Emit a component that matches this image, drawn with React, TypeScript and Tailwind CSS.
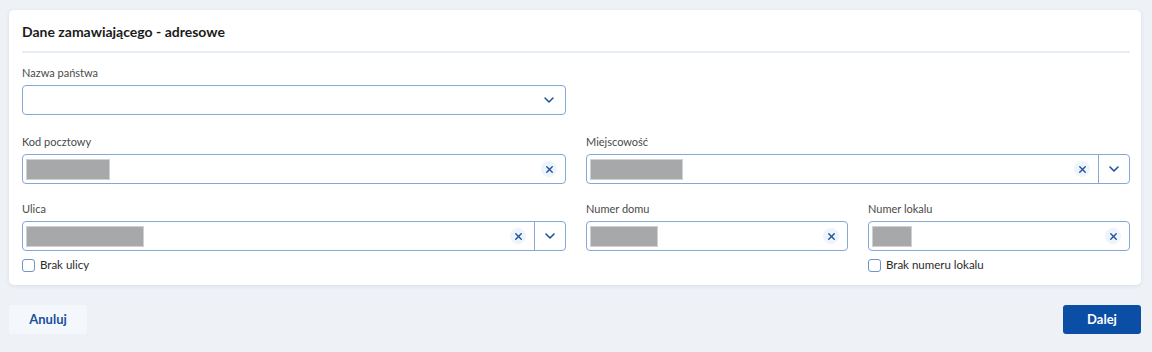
import { ChevronDown, X } from 'lucide-react';

const font = { fontFamily: 'Lato, "Open Sans", sans-serif' };

function Redacted({ width }: { width: number }) {
  return (
    <span
      className="block h-[21px] bg-[#a7a8aa] border border-[#cfd0d2]"
      style={{ width }}
    />
  );
}

function ClearButton() {
  return (
    <span className="flex items-center justify-center size-[16px] rounded-full bg-[#eef4fb] text-[#1d4f9c]">
      <X className="size-[11px]" strokeWidth={3} />
    </span>
  );
}

interface FieldProps {
  label: string;
  redacted?: number;
  clearable?: boolean;
  dropdown?: boolean;
  select?: boolean;
  checkbox?: string;
}

function Field({ label, redacted, clearable, dropdown, select, checkbox }: FieldProps) {
  return (
    <div className="flex flex-col">
      <label className="text-[11px] leading-[16px] text-[#4a4a4a] mb-[4px]">{label}</label>
      <div className="flex h-[30px] rounded-[4px] border border-[#86a8d8] bg-white">
        <div className="flex flex-1 items-center pl-[3px] pr-[8px]">
          {redacted ? <Redacted width={redacted} /> : null}
          <span className="flex-1" />
          {clearable && <ClearButton />}
          {select && <ChevronDown className="size-[16px] text-[#1d4f9c]" strokeWidth={2.2} />}
        </div>
        {dropdown && (
          <div className="flex w-[31px] items-center justify-center border-l border-[#86a8d8]">
            <ChevronDown className="size-[16px] text-[#1d4f9c]" strokeWidth={2.4} />
          </div>
        )}
      </div>
      {checkbox && (
        <div className="flex items-center gap-[5px] mt-[6px]">
          <span className="size-[13px] rounded-[3px] border border-[#6f94cc] bg-white" />
          <span className="text-[11.5px] leading-[16px] text-[#2b2b2b]">{checkbox}</span>
        </div>
      )}
    </div>
  );
}

export default function App() {
  return (
    <div className="min-h-[352px] w-[1152px] bg-[#eef2f7] pt-[10px] pl-[9px]" style={font}>
      <div className="w-[1132px] rounded-[5px] bg-white pl-[13px] pr-[11px] pt-[12px] pb-[12px] shadow-[0_1px_4px_rgba(30,60,110,0.10)]">
        <h2 className="text-[14px] leading-[20px] font-bold text-[#1b1b1b]">Dane zamawiającego - adresowe</h2>
        <div className="mt-[9px] h-[2px] bg-[#e6edf7]" />

        <div className="mt-[12px] grid grid-cols-2 gap-x-5">
          <Field label="Nazwa państwa" select />
        </div>

        <div className="mt-[19px] grid grid-cols-2 gap-x-5">
          <Field label="Kod pocztowy" redacted={84} clearable />
          <Field label="Miejscowość" redacted={93} clearable dropdown />
        </div>

        <div className="mt-[17px] grid grid-cols-2 gap-x-5">
          <Field label="Ulica" redacted={118} clearable dropdown checkbox="Brak ulicy" />
          <div className="grid grid-cols-2 gap-x-5">
            <Field label="Numer domu" redacted={68} clearable />
            <Field label="Numer lokalu" redacted={40} clearable checkbox="Brak numeru lokalu" />
          </div>
        </div>
      </div>

      <div className="mt-[20px] flex w-[1132px] justify-between">
        <button className="h-[29px] w-[78px] rounded-[3px] bg-[#f4f8fd] text-[13px] font-bold text-[#1d4f9c]">
          Anuluj
        </button>
        <button className="h-[29px] w-[78px] rounded-[3px] bg-[#0b4ea6] text-[13px] font-bold text-white">
          Dalej
        </button>
      </div>
    </div>
  );
}
